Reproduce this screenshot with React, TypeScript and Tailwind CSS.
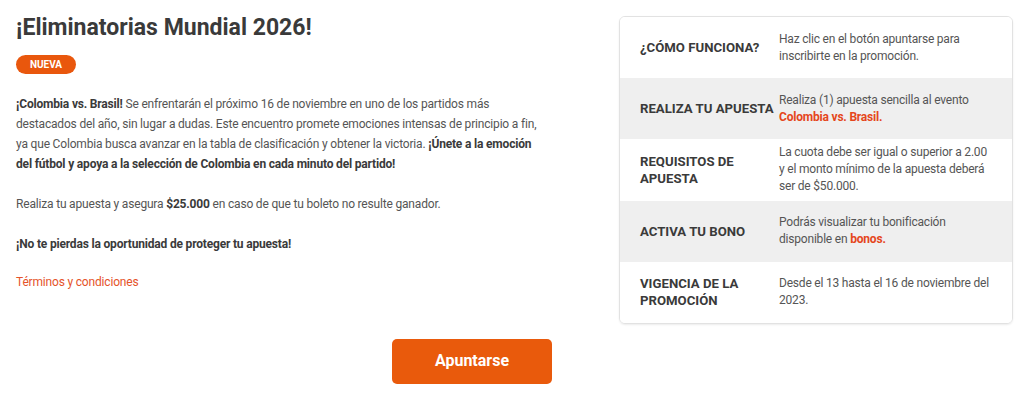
import React from 'react';

const rows: { label: string; value: React.ReactNode }[] = [
  {
    label: '¿Cómo funciona?',
    value: 'Haz clic en el botón apuntarse para inscribirte en la promoción.',
  },
  {
    label: 'Realiza tu apuesta',
    value: (
      <>
        Realiza (1) apuesta sencilla al evento{' '}
        <span className="font-bold text-[#e5461c]">Colombia vs. Brasil.</span>
      </>
    ),
  },
  {
    label: 'Requisitos de apuesta',
    value: 'La cuota debe ser igual o superior a 2.00 y el monto mínimo de la apuesta deberá ser de $50.000.',
  },
  {
    label: 'Activa tu bono',
    value: (
      <>
        Podrás visualizar tu bonificación disponible en{' '}
        <span className="font-bold text-[#e5461c]">bonos.</span>
      </>
    ),
  },
  {
    label: 'Vigencia de la promoción',
    value: 'Desde el 13 hasta el 16 de noviembre del 2023.',
  },
];

export default function App() {
  return (
    <div className="min-h-[402px] bg-white font-['Roboto',sans-serif] text-[#555]">
      <div className="flex items-start">
        <div className="w-[546px] pl-4 pt-[13px]">
          <h1 className="text-[23px] font-bold leading-[30px] text-[#3a3a3a]">¡Eliminatorias Mundial 2026!</h1>
          <span className="mt-[12px] inline-flex h-[19px] w-[60px] items-center justify-center rounded-full bg-[#e9570d] text-[10px] font-bold text-white">
            NUEVA
          </span>

          <div className="w-[524px] text-[12px] leading-[20px] tracking-[-0.18px]">
            <p className="mt-[19px]">
              <b className="text-[#3a3a3a]">¡Colombia vs. Brasil!</b> Se enfrentarán el próximo 16 de noviembre en uno de los partidos más
              destacados del año, sin lugar a dudas. Este encuentro promete emociones intensas de principio a fin,
              ya que Colombia busca avanzar en la tabla de clasificación y obtener la victoria.{' '}
              <b className="text-[#3a3a3a]">¡Únete a la emoción del fútbol y apoya a la selección de Colombia en cada minuto del partido!</b>
            </p>

            <p className="mt-[20px]">
              Realiza tu apuesta y asegura <b className="text-[#3a3a3a]">$25.000</b> en caso de que tu boleto no resulte ganador.
            </p>

            <p className="mt-[20px] font-bold text-[#3a3a3a]">¡No te pierdas la oportunidad de proteger tu apuesta!</p>

            <a className="mt-[18px] block text-[#e5532a]">Términos y condiciones</a>
          </div>
        </div>

        <div className="ml-[73px] mt-4 w-[394px] overflow-hidden rounded-[6px] border border-[#e2e2e2] shadow-[0_1px_2px_rgba(0,0,0,0.08)]">
          {rows.map((row, i) => (
            <div
              key={row.label}
              className={`flex h-[61.2px] items-center pl-5 pr-5 ${i % 2 === 1 ? 'bg-[#efefef]' : 'bg-white'}`}
            >
              <div className="w-[139px] shrink-0 text-[13.2px] font-bold uppercase leading-[17px] text-[#3a3a3a]">
                {row.label}
              </div>
              <div className="text-[12px] leading-[17px] tracking-[-0.2px] text-[#555]">{row.value}</div>
            </div>
          ))}
        </div>
      </div>

      <div className="mt-[15px] flex w-[944px] justify-center">
        <button className="h-[45px] w-[160px] rounded-[5px] bg-[#e95a0c] text-[16px] font-bold text-white">
          Apuntarse
        </button>
      </div>
    </div>
  );
}
